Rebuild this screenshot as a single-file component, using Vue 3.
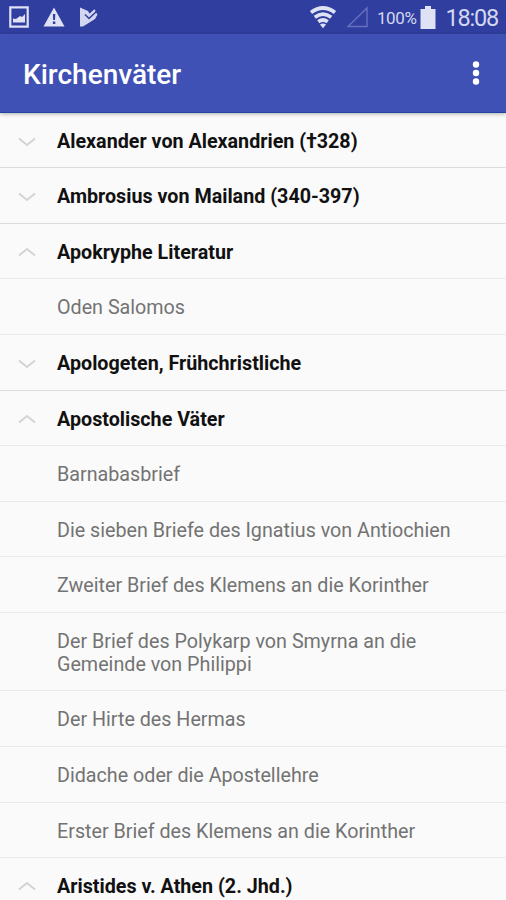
<template>
  <div class="screen">
    <div class="status-bar">
      <div class="status-left">
        <svg width="20" height="22" viewBox="0 0 20 22">
          <path d="M1.3 1.3h17.4v19.4H1.3z" fill="none" stroke="#dfe1f5" stroke-width="2.2" />
          <path d="M4 16.5v-4l3 .5 4-3 2 1 3-3v8.500z" fill="#dfe1f5" />
        </svg>
        <svg width="22" height="20" viewBox="0 0 22 20">
          <path d="M11 .5 21.500 19.500H.5z" fill="#dfe1f5" />
          <path d="M9.900 7h2.400l-.3 6h-1.800zM9.900 14.500h2.400v2.400H9.900z" fill="#303f9f" />
        </svg>
        <svg width="20" height="22" viewBox="0 0 20 22">
          <path d="M1 1.500 9 5l2 4 4-5 3.500 4.500L16 13 4 20.500H1z" fill="#d3d6f0" />
          <path d="m6 8.500 4 4L18 5" fill="none" stroke="#303f9f" stroke-width="1.600" />
          <path d="m8 6 2.500 3L16 4" fill="none" stroke="#d3d6f0" stroke-width="1.800" />
        </svg>
      </div>
      <div class="status-right">
        <svg class="wifi" width="28" height="24" viewBox="0 0 28 24">
          <g fill="none" stroke="#dfe1f5" stroke-width="3.700">
            <path d="M2 7.500q12-9 24 0" />
            <path d="M5.800 12.300q8.200-6.200 16.400 0" />
            <path d="M9.300 16.700q4.700-3.400 9.400 0" />
          </g>
          <path d="M11 19.500q3-2 6 0l-3 3.700z" fill="#dfe1f5" />
        </svg>
        <svg class="signal" width="23" height="22" viewBox="0 0 23 22">
          <path d="M21 2v18.500H2z" fill="none" stroke="#6570bf" stroke-width="1.400" />
        </svg>
        <span class="percent">100%</span>
        <svg class="battery" width="16" height="23" viewBox="0 0 16 23">
          <path d="M5 0h6v3h4.500v20H.5V3H5z" fill="#dfe1f5" />
        </svg>
        <span class="clock">18:08</span>
      </div>
    </div>

    <div class="toolbar">
      <h1>Kirchenväter</h1>
      <svg class="more" width="10" height="26" viewBox="0 0 10 26">
        <circle cx="5" cy="4.500" r="3.200" />
        <circle cx="5" cy="13" r="3.200" />
        <circle cx="5" cy="21.500" r="3.200" />
      </svg>
    </div>

    <ul class="list">
      <template v-for="group in groups" :key="group.title">
        <li class="row group" :class="{ closed: !group.open }" @click="toggle(group)">
          <svg class="arrow" width="18" height="9" viewBox="0 0 18 9">
            <path :d="group.open ? 'M1 7.500 9 1 17 7.500' : 'M1 1.500 9 8 17 1.500'" />
          </svg>
          <span>{{ group.title }}</span>
        </li>
        <template v-if="group.open">
          <li v-for="work in group.works" :key="work" class="row work">{{ work }}</li>
        </template>
      </template>
    </ul>
  </div>
</template>

<script setup>
import { ref } from 'vue';

const groups = ref([
  { title: 'Alexander von Alexandrien (†328)', open: false, works: [] },
  { title: 'Ambrosius von Mailand (340-397)', open: false, works: [] },
  { title: 'Apokryphe Literatur', open: true, works: ['Oden Salomos'] },
  { title: 'Apologeten, Frühchristliche', open: false, works: [] },
  {
    title: 'Apostolische Väter',
    open: true,
    works: [
      'Barnabasbrief',
      'Die sieben Briefe des Ignatius von Antiochien',
      'Zweiter Brief des Klemens an die Korinther',
      'Der Brief des Polykarp von Smyrna an die Gemeinde von Philippi',
      'Der Hirte des Hermas',
      'Didache oder die Apostellehre',
      'Erster Brief des Klemens an die Korinther'
    ]
  },
  { title: 'Aristides v. Athen (2. Jhd.)', open: true, works: [] }
]);

const toggle = (group) => {
  group.open = !group.open;
}
</script>

<style>
body {
  margin: 0;
  overflow: hidden;
}
</style>

<style scoped>
.screen {
  height: 900px;
  overflow: hidden;
  background-color: #fafafa;
  font-family: Roboto, "Liberation Sans", sans-serif;
}

.status-bar {
  display: flex;
  justify-content: space-between;
  box-sizing: border-box;
  height: 34px;
  padding: 0 8px 0 9px;
  background-color: #303f9f;
  color: #d3d7f0;
}

.status-left,
.status-right {
  display: flex;
  align-items: center;
}

.status-left {
  gap: 14px;
}

.wifi {
  margin-right: 9px;
}

.signal {
  margin-right: 8px;
}

.percent {
  padding-top: 2px;
  font-size: 17px;
  letter-spacing: -.4px;
}

.battery {
  margin: 0 9px 0 4px;
}

.clock {
  padding-top: 2px;
  font-size: 23.500px;
  letter-spacing: -1.200px;
}

.toolbar {
  position: relative;
  display: flex;
  align-items: center;
  justify-content: space-between;
  box-sizing: border-box;
  height: 78.700px;
  padding: 0 25px 0 23px;
  background-color: #3f51b5;
  border-bottom: 1px solid #2340a4;
  box-shadow: 0 1px 4px rgba(0, 0, 0, .3);
}

.toolbar h1 {
  margin: 0;
  padding-top: 3px;
  color: #fff;
  font-size: 28px;
  font-weight: 500;
}

.more {
  fill: #fff;
  padding-top: 1px;
}

.list {
  list-style-type: none;
  margin: 0;
  padding: 0;
}

.row {
  display: flex;
  align-items: center;
  box-sizing: border-box;
  min-height: 55.580px;
  padding: 17px 40px 14.500px 57px;
  border-bottom: 1px solid #ebebeb;
  font-size: 19.720px;
  line-height: 23px;
}

.group {
  padding-left: 18px;
  color: #111;
  font-weight: 700;
  cursor: pointer;
}

.closed {
  border-bottom-color: #dcdcdc;
}

.work {
  color: #737373;
}

.arrow {
  flex: none;
  margin-right: 21px;
  fill: none;
  stroke: #d2d2d2;
  stroke-width: 1.800;
}
</style>
